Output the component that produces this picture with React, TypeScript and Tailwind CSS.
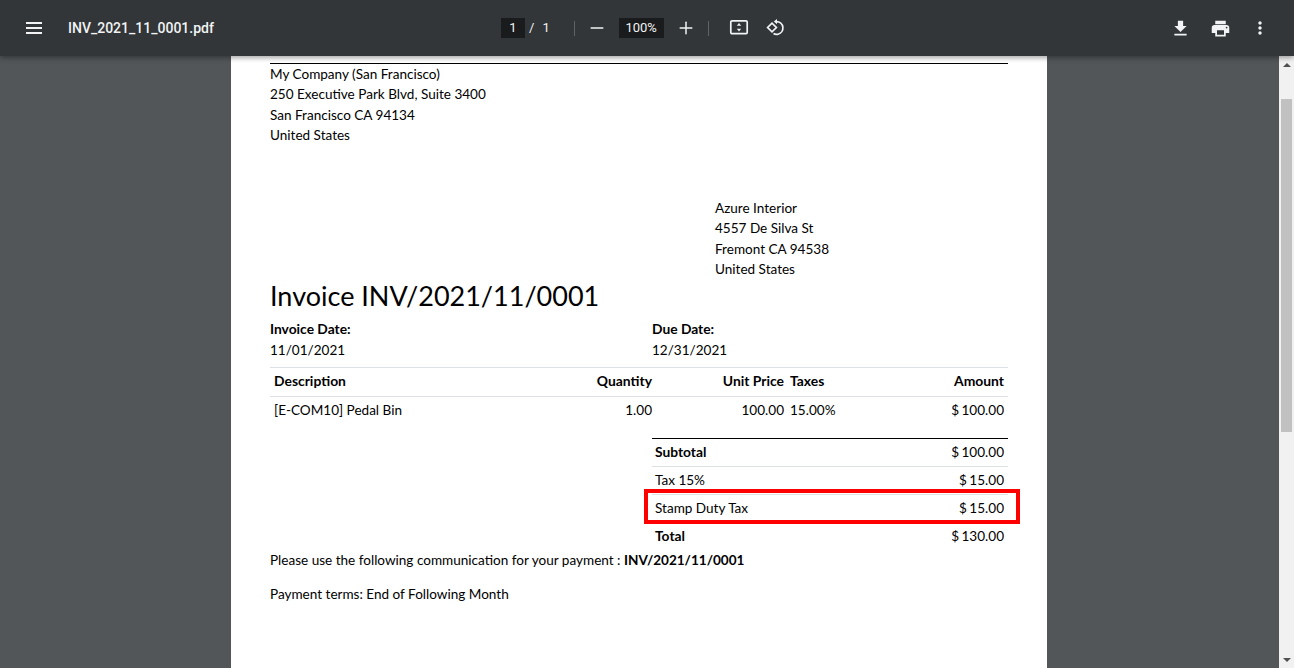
import { Minus, Plus } from 'lucide-react'

const lato = "font-['Lato',sans-serif]"

function Toolbar() {
  return (
    <div className="relative z-10 flex h-14 shrink-0 items-center bg-[#323639] text-[#f1f3f4] shadow-[0_2px_5px_rgba(0,0,0,0.35)] font-['Roboto',sans-serif]">
      <div className="flex w-[430px] items-center">
        <svg className="ml-[26px] h-[12px] w-[16px]" viewBox="0 0 16 12" fill="currentColor">
          <rect y="0" width="16" height="2" />
          <rect y="5" width="16" height="2" />
          <rect y="10" width="16" height="2" />
        </svg>
        <span className="ml-[26px] text-sm font-medium leading-5">INV_2021_11_0001.pdf</span>
      </div>
      <div className="ml-[71px] flex items-center text-[13px]">
        <span className="flex h-5 w-6 items-center justify-center bg-[#191b1c]">1</span>
        <span className="ml-[4px]">/</span>
        <span className="ml-[8px]">1</span>
        <div className="ml-[24px] h-[15px] w-px bg-[#5f6366]" />
        <Minus className="ml-[12px] h-[20px] w-[20px]" strokeWidth={1.8} />
        <span className="ml-[12px] flex h-5 w-[45px] items-center justify-center bg-[#191b1c]">100%</span>
        <Plus className="ml-[12px] h-[20px] w-[20px]" strokeWidth={1.8} />
        <div className="ml-[12px] h-[15px] w-px bg-[#5f6366]" />
        <svg className="ml-[20px] h-[20px] w-[20px]" viewBox="0 0 20 20" fill="none">
          <rect x="1.8" y="2.8" width="16.4" height="12.9" rx="1.2" stroke="currentColor" strokeWidth="1.7" />
          <path d="M10 5 12.2 7.8H7.8ZM10 13.5 7.8 10.8H12.2Z" fill="currentColor" />
        </svg>
        <svg className="ml-[17px] h-[20px] w-[20px]" viewBox="0 0 20 20" fill="none">
          <path d="M1.6 9.5 6 5.1l4.4 4.4L6 13.9Z" stroke="currentColor" strokeWidth="1.7" />
          <path d="M10 3.6h.5a6.4 6.4 0 0 1 1.6 12.6 6.4 6.4 0 0 1-4.6-.6" stroke="currentColor" strokeWidth="1.7" />
          <path d="M11 1 7.8 3.6 11 6.2Z" fill="currentColor" />
        </svg>
      </div>
      <div className="ml-auto mr-[14px] flex items-center">
        <div className="flex w-10 justify-center">
          <svg className="h-[21px] w-[21px]" viewBox="0 0 24 24" fill="currentColor">
            <path d="M19 9h-4V3H9v6H5l7 7 7-7zM5 18v2h14v-2H5z" />
          </svg>
        </div>
        <div className="flex w-10 justify-center">
          <svg className="h-[21px] w-[21px]" viewBox="0 0 24 24" fill="currentColor">
            <path d="M19 8H5c-1.66 0-3 1.34-3 3v6h4v4h12v-4h4v-6c0-1.66-1.34-3-3-3zm-3 11H8v-5h8v5zm3-7c-.55 0-1-.45-1-1s.45-1 1-1 1 .45 1 1-.45 1-1 1zm-1-9H6v4h12V3z" />
          </svg>
        </div>
        <div className="flex w-10 justify-center">
          <svg className="h-[20px] w-[20px]" viewBox="0 0 24 24" fill="currentColor">
            <path d="M12 8c1.1 0 2-.9 2-2s-.9-2-2-2-2 .9-2 2 .9 2 2 2zm0 2c-1.1 0-2 .9-2 2s.9 2 2 2 2-.9 2-2-.9-2-2-2zm0 6c-1.1 0-2 .9-2 2s.9 2 2 2 2-.9 2-2-.9-2-2-2z" />
          </svg>
        </div>
      </div>
    </div>
  )
}

function Scrollbar() {
  return (
    <div className="flex w-[15px] shrink-0 flex-col items-center bg-[#f1f1f1]">
      <div className="flex h-[17px] w-full items-center justify-center">
        <div className="h-0 w-0 border-x-[4px] border-b-[4px] border-x-transparent border-b-[#505050]" />
      </div>
      <div className="mt-[26px] h-[333px] w-[11px] bg-[#c1c1c1]" />
      <div className="mt-auto flex h-[17px] w-full items-center justify-center">
        <div className="h-0 w-0 border-x-[4px] border-t-[4px] border-x-transparent border-t-[#505050]" />
      </div>
    </div>
  )
}

function TotalRow({ label, value, bold, className }: { label: string; value: string; bold?: boolean; className: string }) {
  return (
    <div className={`flex items-center justify-between pl-[3px] pr-[4px] ${className}`}>
      <span className={bold ? 'text-[13.8px] font-bold' : ''}>{label}</span>
      <span className="[word-spacing:-1px]">{value}</span>
    </div>
  )
}

function InvoicePage() {
  return (
    <div className={`relative ml-[231px] h-full w-[816px] overflow-hidden bg-white px-[39px] pt-[7px] text-[13.55px] leading-[20.4px] text-black ${lato}`}>
      <div className="border-t border-black">
        <div>My Company (San Francisco)</div>
        <div>250 Executive Park Blvd, Suite 3400</div>
        <div>San Francisco CA 94134</div>
        <div>United States</div>
      </div>

      <div className="ml-[445px] mt-[52.2px]">
        <div>Azure Interior</div>
        <div>4557 De Silva St</div>
        <div>Fremont CA 94538</div>
        <div>United States</div>
      </div>

      <h1 className="mt-[2px] text-[27px] leading-[30px]">Invoice INV/2021/11/0001</h1>

      <div className="mt-[8px] flex">
        <div className="w-[382px]">
          <div className="text-[13.8px] font-bold">Invoice Date:</div>
          <div className="mt-[0.5px]">11/01/2021</div>
        </div>
        <div>
          <div className="text-[13.8px] font-bold">Due Date:</div>
          <div className="mt-[0.5px]">12/31/2021</div>
        </div>
      </div>

      <div className="mt-[6px] flex h-[29px] items-center border-t border-[#dee2e6] px-[4px] pb-[2px] text-[13.9px] font-bold">
        <span className="w-[300px]">Description</span>
        <span className="w-[78px] text-right">Quantity</span>
        <span className="w-[132px] text-right">Unit Price</span>
        <span className="ml-[6px] w-[60px]">Taxes</span>
        <span className="flex-1 text-right">Amount</span>
      </div>
      <div className="flex h-[28px] items-center border-t border-[#dee2e6] px-[4px]">
        <span className="w-[300px]">[E-COM10] Pedal Bin</span>
        <span className="w-[78px] text-right">1.00</span>
        <span className="w-[132px] text-right">100.00</span>
        <span className="ml-[6px] w-[60px]">15.00%</span>
        <span className="flex-1 text-right [word-spacing:-1px]">$ 100.00</span>
      </div>

      <div className="ml-[382px] mt-[14px] border-t border-black">
        <TotalRow label="Subtotal" value="$ 100.00" bold className="h-[27px] pb-[1px]" />
        <TotalRow label="Tax 15%" value="$ 15.00" className="h-[28px] border-t border-[#dee2e6]" />
        <TotalRow label="Stamp Duty Tax" value="$ 15.00" className="h-[28px] border-t border-[#dee2e6]" />
        <TotalRow label="Total" value="$ 130.00" bold className="h-[28px]" />
      </div>

      <div>
        Please use the following communication for your payment : <b>INV/2021/11/0001</b>
      </div>
      <div className="mt-[14px]">Payment terms: End of Following Month</div>

      {/* annotation box on top of the stamp duty row */}
      <div className="absolute left-[413px] top-[433px] h-[35px] w-[376px] border-[4px] border-[#ff0000]" />
    </div>
  )
}

export default function App() {
  return (
    <div className="flex h-screen flex-col overflow-hidden bg-[#525659]">
      <Toolbar />
      <div className="flex min-h-0 flex-1">
        <div className="min-w-0 flex-1">
          <InvoicePage />
        </div>
        <Scrollbar />
      </div>
    </div>
  )
}
